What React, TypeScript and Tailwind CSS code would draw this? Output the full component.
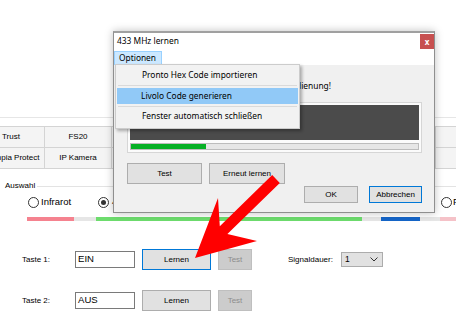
import React from 'react';

const ui = "font-['Noto_Sans',sans-serif]";

function WinButton({ label, className = '', focused = false, disabled = false }: { label: string; className?: string; focused?: boolean; disabled?: boolean }) {
  return (
    <div
      className={
        'flex items-center justify-center border ' +
        (disabled
          ? 'bg-[#cccccc] border-[#bfbfbf] text-[#8c8c8c] '
          : focused
          ? 'bg-[#e1e1e1] border-[#0078d7] text-black '
          : 'bg-[#e1e1e1] border-[#adadad] text-black ') +
        className
      }
    >
      {label}
    </div>
  );
}

function Radio({ checked = false }: { checked?: boolean }) {
  return (
    <div className="w-[11px] h-[11px] rounded-full border border-[#333333] bg-white flex items-center justify-center shrink-0">
      {checked && <div className="w-[5px] h-[5px] rounded-full bg-[#333333]" />}
    </div>
  );
}

function TasteRow({ label, value, focused }: { label: string; value: string; focused?: boolean }) {
  return (
    <div className="flex items-center h-[21px]">
      <div className="w-[75px] pl-[22px]">{label}</div>
      <div className="w-[60px] h-[17px] border border-[#7a7a7a] bg-white flex items-center pl-[2px] text-[9.6px]">{value}</div>
      <WinButton label="Lernen" focused={focused} className="ml-[7px] w-[69px] h-[21px]" />
      <WinButton label="Test" disabled className="ml-[7px] w-[34px] h-[21px]" />
    </div>
  );
}

export default function App() {
  const cols = [
    ['Trust', 'Olympia Protect'],
    ['FS20', 'IP Kamera'],
    ['', ''],
    ['', ''],
    ['', ''],
    ['', ''],
    ['', ''],
    ['', ''],
  ];
  const widths = ['w-[67px]', 'w-[67px]', 'w-[67px]', 'w-[67px]', 'w-[67px]', 'w-[67px]', 'w-[56px]', 'w-[67px]'];

  return (
    <div className="relative w-[456px] h-[324px] overflow-hidden bg-white text-black text-[8px] font-['Liberation_Sans',Arial,sans-serif]">
      {/* background form */}
      <div className="h-[117px]" />
      <div className="h-[9px] border-t border-[#e6e6e6]" />
      <div className="ml-[-22px] border-t border-[#d4d4d4]">
        {[0, 1].map((r) => (
          <div key={r} className="flex h-[21px] border-b border-[#d4d4d4]">
            {cols.map((c, i) => (
              <div
                key={i}
                className={widths[i] + ' shrink-0 bg-[#f4f4f4] border-r border-[#d4d4d4] flex items-center justify-center whitespace-nowrap overflow-hidden'}
              >
                {c[r]}
              </div>
            ))}
          </div>
        ))}
      </div>

      {/* Auswahl group */}
      <div className="mt-[12px] flex items-center h-[10px]">
        <span className="pl-[5px] pr-[2px]">Auswahl</span>
        <div className="flex-1 h-px bg-[#e3e3e3]" />
      </div>
      <div className="mt-[5px] flex items-center h-[12px] text-[9.5px]">
        <div className="ml-[28px] flex items-center gap-[2px]">
          <Radio />
          <span>Infrarot</span>
        </div>
        <div className="ml-[27px] flex items-center gap-[3px]">
          <Radio checked />
          <span>433 MHz</span>
        </div>
        <div className="ml-auto w-[15px] flex items-center gap-[1px] overflow-hidden">
          <Radio />
          <span>F</span>
        </div>
      </div>
      <div className="mt-[9px] ml-[27px] flex h-[4px] bg-[#e6e6e6]">
        <div className="w-[47px] bg-[#f5828f]" />
        <div className="w-[22px]" />
        <div className="w-[266px] bg-[#6ddc6d]" />
        <div className="w-[19px]" />
        <div className="w-[39px] bg-[#1565c8]" />
        <div className="w-[20px]" />
        <div className="flex-1 bg-[#f5c2c8]" />
      </div>

      {/* Tasten */}
      <div className="mt-[28px] flex items-center">
        <TasteRow label="Taste 1:" value="EIN" focused />
        <div className="ml-[36px] w-[53px]">Signaldauer:</div>
        <div className="w-[42px] h-[15px] bg-[#e1e1e1] border border-[#acacac] flex items-center justify-between pl-[3px] pr-[4px] text-[8.5px]">
          <span>1</span>
          <svg width="8" height="5" viewBox="0 0 8 5">
            <polyline points="0.5,0.5 4,4 7.5,0.5" fill="none" stroke="#333" strokeWidth="1" />
          </svg>
        </div>
      </div>
      <div className="mt-[20px]">
        <TasteRow label="Taste 2:" value="AUS" />
      </div>

      {/* dialog window */}
      <div className="absolute left-[113px] top-[31px] w-[322px] h-[182px] border border-[#8f8f8f] border-t-2 border-t-[#a0a0a0] bg-[#f0f0f0] flex flex-col shadow-[0_0_8px_rgba(0,0,0,0.25)]">
        <div className={ui + ' h-[16px] bg-white flex items-center justify-between text-[8.4px] pl-[3px]'}>
          <span>433 MHz lernen</span>
          <div className="w-[14px] h-[15px] mt-[1px] bg-[#c75050] text-white flex items-center justify-center text-[8px] font-bold">x</div>
        </div>
        <div className={ui + ' h-[16px] bg-white pt-[2px] text-[8.4px]'}>
          <div className="w-[48px] h-[14px] bg-[#cce8ff] border border-[#99d1ff] flex items-center pl-[4px]">Optionen</div>
        </div>
        <div className="flex-1 pl-[13px] pr-[12px]">
          <div className={ui + ' mt-[16px] w-[204px] h-[10px] flex items-center justify-end overflow-hidden whitespace-nowrap text-[8.4px]'}>
            Bitte drücken Sie eine Taste auf der Fernbedienung!
          </div>
          <div className="mt-[11px] w-[295px] border border-[#d6d6d6] bg-[#fbfbfb] px-[2px] pt-[2px] pb-[2px]">
            <div className="h-[35px] bg-[#4b4b4b]" />
            <div className="mt-[3px] h-[7px] bg-[#e6e6e6] border border-[#bcbcbc] flex">
              <div className="w-[75px] bg-[#06b025]" />
            </div>
          </div>
          <div className="mt-[10px] flex gap-[7px]">
            <WinButton label="Test" className="w-[75px] h-[21px]" />
            <WinButton label="Erneut lernen" className="w-[76px] h-[21px]" />
          </div>
          <div className="mt-[2px] flex justify-end gap-[11px]">
            <WinButton label="OK" className="w-[54px] h-[17px]" />
            <WinButton label="Abbrechen" focused className="w-[53px] h-[17px]" />
          </div>
        </div>
      </div>

      {/* Optionen menu */}
      <div className={ui + ' absolute left-[115px] top-[64px] w-[185px] h-[65px] bg-[#f2f2f2] border border-[#cccccc] shadow-[2px_2px_3px_rgba(0,0,0,0.3)] text-[8.4px] px-[1px] pt-[1px]'}>
        <div className="h-[19px] flex items-center pl-[25px]">Pronto Hex Code importieren</div>
        <div className="mx-[1px] h-px bg-[#dadada]" />
        <div className="mt-[2px] h-[16px] bg-[#91c9f7] flex items-center pl-[24px]">Livolo Code generieren</div>
        <div className="mt-[2px] mx-[1px] h-px bg-[#dadada]" />
        <div className="h-[19px] flex items-center pl-[25px]">Fenster automatisch schließen</div>
      </div>

      {/* red arrow */}
      <svg className="absolute left-0 top-0 pointer-events-none" width="456" height="324" viewBox="0 0 456 324">
        <polygon
          points="272.2,175.1 219.8,226.2 218,198 195,258 257,241 227.4,234 279.8,182.9"
          fill="#ff0000"
        />
      </svg>
    </div>
  );
}
